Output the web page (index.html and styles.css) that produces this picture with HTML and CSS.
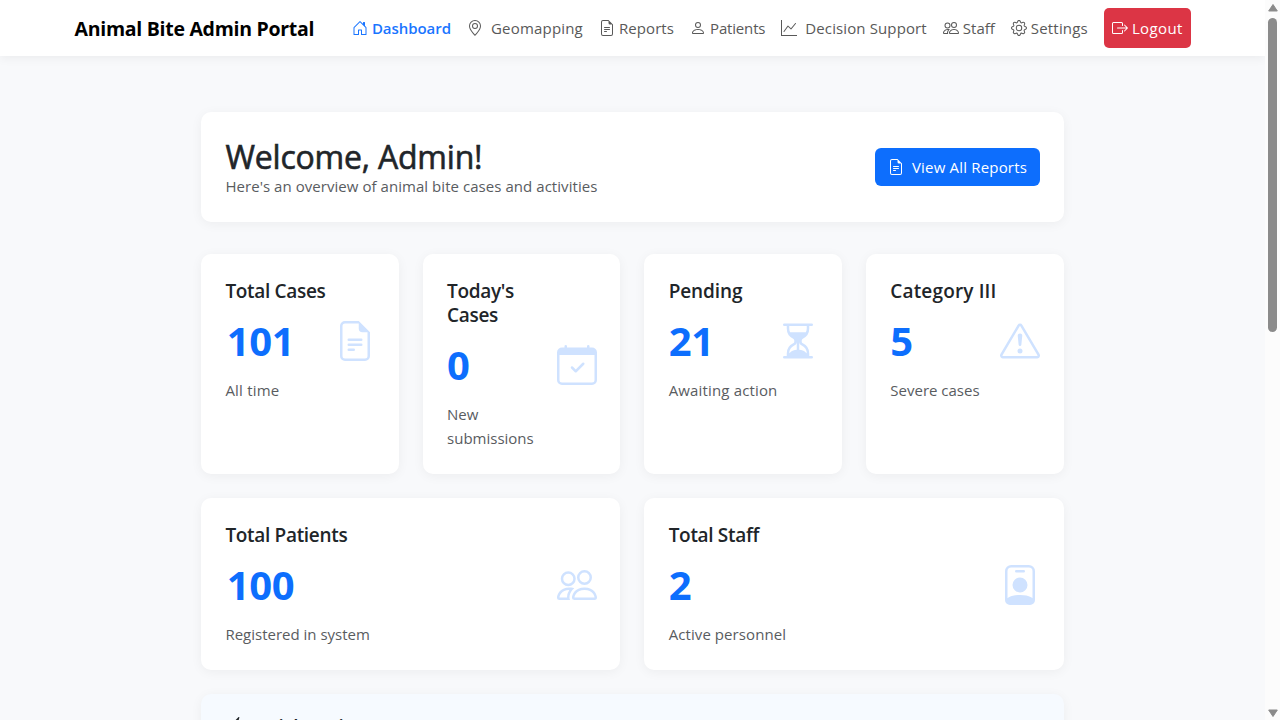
FILE: index.html
```
<!DOCTYPE html>
<html lang="en">
<head>
<meta charset="utf-8">
<title>Animal Bite Admin Portal</title>
<link rel="stylesheet" href="styles.css">
</head>
<body>
<svg class="sprite" aria-hidden="true">
  <symbol id="house" viewBox="0 0 16 16"><path d="M8.354 1.146a.5.5 0 0 0-.708 0l-6 6A.5.5 0 0 0 1.5 7.5v7a.5.5 0 0 0 .5.5h4.5a.5.5 0 0 0 .5-.5v-4h2v4a.5.5 0 0 0 .5.5H14a.5.5 0 0 0 .5-.5v-7a.5.5 0 0 0-.146-.354L13 5.793V2.5a.5.5 0 0 0-.5-.5h-1a.5.5 0 0 0-.5.5v1.293zM2.5 14V7.707l5.5-5.5 5.5 5.5V14H10v-4a.5.5 0 0 0-.5-.5h-3a.5.5 0 0 0-.5.5v4z"/></symbol>
  <symbol id="geo" viewBox="0 0 16 16"><path d="M12.166 8.94c-.524 1.062-1.234 2.12-1.96 3.07A32 32 0 0 1 8 14.58a32 32 0 0 1-2.206-2.57c-.726-.95-1.436-2.008-1.96-3.07C3.304 7.867 3 6.862 3 6a5 5 0 0 1 10 0c0 .862-.305 1.867-.834 2.94M8 16s6-5.686 6-10A6 6 0 0 0 2 6c0 4.314 6 10 6 10"/><path d="M8 8a2 2 0 1 1 0-4 2 2 0 0 1 0 4m0 1a3 3 0 1 0 0-6 3 3 0 0 0 0 6"/></symbol>
  <symbol id="file" viewBox="0 0 16 16"><path d="M5.5 7a.5.5 0 0 0 0 1h5a.5.5 0 0 0 0-1zM5 9.5a.5.5 0 0 1 .5-.5h5a.5.5 0 0 1 0 1h-5a.5.5 0 0 1-.5-.5m0 2a.5.5 0 0 1 .5-.5h2a.5.5 0 0 1 0 1h-2a.5.5 0 0 1-.5-.5"/><path d="M9.5 0H4a2 2 0 0 0-2 2v12a2 2 0 0 0 2 2h8a2 2 0 0 0 2-2V4.5zm0 1v2A1.5 1.5 0 0 0 11 4.5h2V14a1 1 0 0 1-1 1H4a1 1 0 0 1-1-1V2a1 1 0 0 1 1-1z"/></symbol>
  <symbol id="person" viewBox="0 0 16 16"><path d="M8 8a3 3 0 1 0 0-6 3 3 0 0 0 0 6m2-3a2 2 0 1 1-4 0 2 2 0 0 1 4 0m4 8c0 1-1 1-1 1H3s-1 0-1-1 1-4 6-4 6 3 6 4m-1-.004c-.001-.246-.154-.986-.832-1.664C11.516 10.68 10.289 10 8 10s-3.516.68-4.168 1.332c-.678.678-.83 1.418-.832 1.664z"/></symbol>
  <symbol id="graph" viewBox="0 0 16 16"><path d="M0 0h1v15h15v1H0zm14.817 3.113a.5.5 0 0 1 .07.704l-4.5 5.5a.5.5 0 0 1-.74.037L7.06 6.767l-3.656 5.027a.5.5 0 0 1-.808-.588l4-5.5a.5.5 0 0 1 .758-.06l2.609 2.61 4.15-5.073a.5.5 0 0 1 .704-.07"/></symbol>
  <symbol id="people" viewBox="0 0 16 16"><path d="M15 14s1 0 1-1-1-4-5-4-5 3-5 4 1 1 1 1zm-7.978-1L7 12.996c.001-.264.167-1.03.76-1.72C8.312 10.629 9.282 10 11 10c1.717 0 2.687.63 3.24 1.276.593.69.758 1.457.76 1.72l-.008.002-.014.002zM11 7a2 2 0 1 0 0-4 2 2 0 0 0 0 4m3-2a3 3 0 1 1-6 0 3 3 0 0 1 6 0M6.936 9.28a6 6 0 0 0-1.23-.247A7 7 0 0 0 5 9c-4 0-5 3-5 4q0 1 1 1h4.216A2.24 2.24 0 0 1 5 13c0-1.01.377-2.042 1.09-2.904.243-.294.526-.569.846-.816M4.92 10A5.5 5.5 0 0 0 4 13H1c0-.26.164-1.03.76-1.724.545-.636 1.492-1.256 3.16-1.275ZM1.5 5.5a3 3 0 1 1 6 0 3 3 0 0 1-6 0m3-2a2 2 0 1 0 0 4 2 2 0 0 0 0-4"/></symbol>
  <symbol id="gear" viewBox="0 0 16 16"><path d="M8 4.754a3.246 3.246 0 1 0 0 6.492 3.246 3.246 0 0 0 0-6.492M5.754 8a2.246 2.246 0 1 1 4.492 0 2.246 2.246 0 0 1-4.492 0"/><path d="M9.796 1.343c-.527-1.79-3.065-1.79-3.592 0l-.094.319a.873.873 0 0 1-1.255.52l-.292-.16c-1.64-.892-3.433.902-2.54 2.541l.159.292a.873.873 0 0 1-.52 1.255l-.319.094c-1.79.527-1.79 3.065 0 3.592l.319.094a.873.873 0 0 1 .52 1.255l-.16.292c-.892 1.64.901 3.434 2.541 2.54l.292-.159a.873.873 0 0 1 1.255.52l.094.319c.527 1.79 3.065 1.79 3.592 0l.094-.319a.873.873 0 0 1 1.255-.52l.292.16c1.64.893 3.434-.902 2.54-2.541l-.159-.292a.873.873 0 0 1 .52-1.255l.319-.094c1.79-.527 1.79-3.065 0-3.592l-.319-.094a.873.873 0 0 1-.52-1.255l.16-.292c.893-1.64-.902-3.433-2.541-2.54l-.292.159a.873.873 0 0 1-1.255-.52zm-2.633.283c.246-.835 1.428-.835 1.674 0l.094.319a1.873 1.873 0 0 0 2.693 1.115l.291-.16c.764-.415 1.6.42 1.184 1.185l-.159.292a1.873 1.873 0 0 0 1.116 2.692l.318.094c.835.246.835 1.428 0 1.674l-.319.094a1.873 1.873 0 0 0-1.115 2.693l.16.291c.415.764-.42 1.6-1.185 1.184l-.291-.159a1.873 1.873 0 0 0-2.693 1.116l-.094.318c-.246.835-1.428.835-1.674 0l-.094-.319a1.873 1.873 0 0 0-2.692-1.115l-.292.16c-.764.415-1.6-.42-1.184-1.185l.159-.291A1.873 1.873 0 0 0 1.945 8.93l-.319-.094c-.835-.246-.835-1.428 0-1.674l.319-.094A1.873 1.873 0 0 0 3.06 4.377l-.16-.292c-.415-.764.42-1.6 1.185-1.184l.292.159a1.873 1.873 0 0 0 2.692-1.115z"/></symbol>
  <symbol id="exit" viewBox="0 0 16 16"><path d="M10 12.5a.5.5 0 0 1-.5.5h-8a.5.5 0 0 1-.5-.5v-9a.5.5 0 0 1 .5-.5h8a.5.5 0 0 1 .5.5v2a.5.5 0 0 0 1 0v-2A1.5 1.5 0 0 0 9.5 2h-8A1.5 1.5 0 0 0 0 3.5v9A1.5 1.5 0 0 0 1.5 14h8a1.5 1.5 0 0 0 1.5-1.5v-2a.5.5 0 0 0-1 0z"/><path d="M15.854 8.354a.5.5 0 0 0 0-.708l-3-3a.5.5 0 0 0-.708.708L14.293 7.5H5.5a.5.5 0 0 0 0 1h8.793l-2.147 2.146a.5.5 0 0 0 .708.708z"/></symbol>
  <symbol id="calendar" viewBox="0 0 16 16"><path d="M10.854 7.146a.5.5 0 0 1 0 .708l-3 3a.5.5 0 0 1-.708 0l-1.5-1.5a.5.5 0 1 1 .708-.708L7.5 9.793l2.646-2.647a.5.5 0 0 1 .708 0"/><path d="M3.5 0a.5.5 0 0 1 .5.5V1h8V.5a.5.5 0 0 1 1 0V1h1a2 2 0 0 1 2 2v11a2 2 0 0 1-2 2H2a2 2 0 0 1-2-2V3a2 2 0 0 1 2-2h1V.5a.5.5 0 0 1 .5-.5M1 4v10a1 1 0 0 0 1 1h12a1 1 0 0 0 1-1V4z"/></symbol>
  <symbol id="hourglass" viewBox="0 0 16 16"><path d="M2.5 15a.5.5 0 1 1 0-1h1v-1a4.5 4.5 0 0 1 2.557-4.06c.29-.139.443-.377.443-.59v-.7c0-.213-.154-.451-.443-.59A4.5 4.5 0 0 1 3.5 3V2h-1a.5.5 0 0 1 0-1h11a.5.5 0 0 1 0 1h-1v1a4.5 4.5 0 0 1-2.557 4.06c-.29.139-.443.377-.443.59v.7c0 .213.154.451.443.59A4.5 4.5 0 0 1 12.5 13v1h1a.5.5 0 0 1 0 1zm2-13v1c0 .537.12 1.045.337 1.5h6.326c.216-.455.337-.963.337-1.5V2zm3 6.35c0 .701-.478 1.236-1.011 1.492A3.5 3.5 0 0 0 4.5 13s.866-1.299 3-1.48zm1 0v3.17c2.134.181 3 1.48 3 1.48a3.5 3.5 0 0 0-1.989-3.158C8.978 9.586 8.5 9.052 8.5 8.351z"/></symbol>
  <symbol id="warning" viewBox="0 0 16 16"><path d="M7.938 2.016A.13.13 0 0 1 8.002 2a.13.13 0 0 1 .063.016.15.15 0 0 1 .054.057l6.857 11.667c.036.06.035.124.002.183a.2.2 0 0 1-.054.06.1.1 0 0 1-.066.017H1.146a.1.1 0 0 1-.066-.017.2.2 0 0 1-.054-.06.18.18 0 0 1 .002-.183L7.884 2.073a.15.15 0 0 1 .054-.057m1.044-.45a1.13 1.13 0 0 0-1.96 0L.165 13.233c-.457.778.091 1.767.98 1.767h13.713c.889 0 1.438-.99.98-1.767z"/><path d="M7.002 12a1 1 0 1 1 2 0 1 1 0 0 1-2 0M7.1 5.995a.905.905 0 1 1 1.8 0l-.35 3.507a.552.552 0 0 1-1.1 0z"/></symbol>
  <symbol id="badge" viewBox="0 0 16 16"><path d="M6.5 2a.5.5 0 0 0 0 1h3a.5.5 0 0 0 0-1zM11 8a3 3 0 1 1-6 0 3 3 0 0 1 6 0"/><path d="M4.5 0A2.5 2.5 0 0 0 2 2.5V14a2 2 0 0 0 2 2h8a2 2 0 0 0 2-2V2.5A2.5 2.5 0 0 0 11.5 0zM3 2.5A1.5 1.5 0 0 1 4.5 1h7A1.5 1.5 0 0 1 13 2.5v10.795a4.2 4.2 0 0 0-.776-.492C11.392 12.387 10.063 12 8 12s-3.392.387-4.224.803a4.2 4.2 0 0 0-.776.492z"/></symbol>
  <symbol id="bolt" viewBox="0 0 16 16"><path d="M11.251.068a.5.5 0 0 1 .227.58L9.677 6.5H13a.5.5 0 0 1 .364.843l-8 8.5a.5.5 0 0 1-.842-.49L6.323 9.5H3a.5.5 0 0 1-.364-.843l8-8.5a.5.5 0 0 1 .615-.09z"/></symbol>
</svg>
<div class="window">
  <div class="page">
    <header class="navbar">
      <a class="brand">Animal Bite Admin Portal</a>
      <nav class="nav">
        <a class="link active"><svg><use href="#house"/></svg><span class="t-dashboard">Dashboard</span></a>
        <a class="link wide"><svg><use href="#geo"/></svg><span class="t-geo">Geomapping</span></a>
        <a class="link"><svg><use href="#file"/></svg><span class="t-reports">Reports</span></a>
        <a class="link"><svg><use href="#person"/></svg><span class="t-patients">Patients</span></a>
        <a class="link wide"><svg><use href="#graph"/></svg><span class="t-decision">Decision Support</span></a>
        <a class="link"><svg><use href="#people"/></svg><span>Staff</span></a>
        <a class="link"><svg><use href="#gear"/></svg><span class="t-settings">Settings</span></a>
        <a class="link logout"><svg><use href="#exit"/></svg><span class="t-logout">Logout</span></a>
      </nav>
    </header>
    <main class="main">
      <section class="card welcome">
        <div>
          <h2>Welcome, Admin!</h2>
          <p class="intro">Here's an overview of animal bite cases and activities</p>
        </div>
        <a class="button"><svg><use href="#file"/></svg><span>View All Reports</span></a>
      </section>
      <section class="stats">
        <article class="card stat">
          <div><h5>Total Cases</h5><div class="number one">101</div><p class="t-alltime">All time</p></div>
          <svg><use href="#file"/></svg>
        </article>
        <article class="card stat">
          <div><h5>Today's<br>Cases</h5><div class="number">0</div><p>New<br>submissions</p></div>
          <svg><use href="#calendar"/></svg>
        </article>
        <article class="card stat">
          <div><h5 class="t-pending">Pending</h5><div class="number">21</div><p class="t-awaiting">Awaiting action</p></div>
          <svg><use href="#hourglass"/></svg>
        </article>
        <article class="card stat">
          <div><h5 class="t-category">Category III</h5><div class="number">5</div><p>Severe cases</p></div>
          <svg><use href="#warning"/></svg>
        </article>
        <article class="card stat half">
          <div><h5>Total Patients</h5><div class="number one">100</div><p>Registered in system</p></div>
          <svg><use href="#people"/></svg>
        </article>
        <article class="card stat half">
          <div><h5>Total Staff</h5><div class="number">2</div><p class="t-active">Active personnel</p></div>
          <svg><use href="#badge"/></svg>
        </article>
      </section>
      <section class="card actions">
        <h5><svg><use href="#bolt"/></svg><span>Quick Actions</span></h5>
      </section>
    </main>
  </div>
  <div class="scrollbar">
    <svg class="arrow" viewBox="0 0 10 8"><path d="M5 .5 9.3 7H.7z"/></svg>
    <div class="thumb"></div>
    <svg class="arrow down" viewBox="0 0 10 8"><path d="M5 7.5.7 1h8.6z"/></svg>
  </div>
</div>
</body>
</html>
```
FILE: styles.css
```
* { box-sizing: border-box; }
html, body { margin: 0; height: 100%; overflow: hidden; }
body {
  font: 400 15px/24px "Open Sans", "Noto Sans", sans-serif;
  color: #212529;
  background: #f8f9fb;
}
h2, h5, p { margin: 0; }
svg { fill: currentColor; flex: none; }
.sprite { display: none; }

.window { display: flex; height: 720px; overflow: hidden; }
.page { flex: 1; min-width: 0; height: 720px; overflow: hidden; }

.navbar {
  display: flex;
  align-items: center;
  height: 56px;
  padding: 8px 0 8px 74.5px;
  background: #fff;
  box-shadow: 0 2px 10px rgba(0, 0, 0, .06);
}
.brand {
  width: 269.4px;
  padding-top: 2px;
  font-size: 19.5px;
  font-weight: 700;
  letter-spacing: -.28px;
  color: #000;
  white-space: nowrap;
}
.nav { display: flex; }
.link {
  display: flex;
  align-items: center;
  gap: 4px;
  height: 40px;
  padding: 0 8px;
  color: #595959;
  white-space: nowrap;
}
.link svg, .button svg { width: 16px; height: 16px; }
.wide { gap: 8px; }
.active { color: #1a75ff; font-weight: 600; }
.logout {
  margin-left: 8px;
  color: #fff;
  background: #dc3545;
  border-radius: 5px;
}
.t-dashboard { letter-spacing: -.05px; }
.t-geo { letter-spacing: .19px; }
.t-reports { letter-spacing: .08px; }
.t-patients { letter-spacing: -.17px; }
.t-decision { letter-spacing: .12px; }
.t-settings { letter-spacing: .18px; }
.t-logout { letter-spacing: .38px; }

.main { width: 862.6px; margin: 56px 0 0 201px; }
.card {
  padding: 24px 23.6px 24px 24.4px;
  background: #fff;
  border-radius: 10px;
  box-shadow: 0 2px 12px rgba(0, 0, 0, .05);
}
.welcome {
  display: flex;
  align-items: center;
  justify-content: space-between;
  height: 110px;
  margin-bottom: 32px;
}
.welcome > div { height: 62px; }
h2 {
  font-size: 32px;
  line-height: 38px;
  font-weight: 500;
  letter-spacing: -.2px;
  padding-top: 2px;
  -webkit-text-stroke: .6px currentColor;
}
.intro { letter-spacing: .05px; margin-top: -2px; }
p { color: #595c5f; }
.button {
  display: flex;
  align-items: center;
  gap: 8px;
  height: 38px;
  padding: 0 13px;
  color: #fff;
  background: #0d6efd;
  border-radius: 6px;
  letter-spacing: .18px;
}

.stats {
  display: grid;
  grid-template-columns: repeat(4, 1fr);
  gap: 24px;
}
.stat { display: flex; justify-content: space-between; align-items: flex-start; }
.stat > div { white-space: nowrap; }
.stat > svg { width: 40px; height: 40px; color: #cfe2ff; margin-top: 43px; }
.stat:nth-child(2) > svg { margin-top: 67px; }
.half { grid-column: span 2; }
h5 {
  font-size: 19px;
  line-height: 24px;
  font-weight: 600;
  letter-spacing: -.32px;
  padding-top: 1px;
  margin-bottom: 8px;
}
.number {
  font-size: 40px;
  line-height: 60px;
  font-weight: 700;
  color: #0d6efd;
  margin-bottom: 7px;
  letter-spacing: -.3px;
}
.one { padding-left: 1.3px; }
.t-pending { letter-spacing: -.1px; }
.t-category { letter-spacing: .15px; }
.t-awaiting { letter-spacing: .15px; }
.t-alltime { letter-spacing: .2px; }
.t-active { letter-spacing: .08px; }

.actions { height: 200px; margin-top: 24px; background: #f6faff; }
.actions h5 { display: flex; gap: 6px; padding-top: 0; margin-top: -3px; font-size: 19px; letter-spacing: 0; }
.actions svg { width: 20px; height: 20px; margin-top: 2px; }

.scrollbar {
  display: flex;
  flex-direction: column;
  align-items: center;
  width: 15px;
  padding: 4px 0 3px;
  background: #fcfcfc;
}
.arrow { width: 10px; height: 8px; fill: #8b8b8b; stroke: #8b8b8b; stroke-width: 1; stroke-linejoin: round; }
.thumb { width: 9px; height: 314px; margin-top: 6px; background: #8b8b8b; border-radius: 5px; }
.down { margin-top: auto; }
```
